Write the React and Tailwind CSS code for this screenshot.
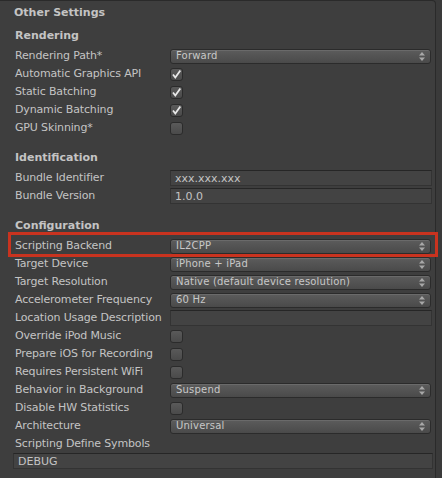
import React from 'react';

const font = { fontFamily: '"DejaVu Sans", "Liberation Sans", sans-serif' };

const Header = ({ children }) => (
  <div className="h-[18px] mb-[2px] flex items-center font-bold text-[11px] text-[#c4c4c4]">{children}</div>
);

const Arrows = () => (
  <svg width="6" height="9" viewBox="0 0 6 9" className="shrink-0">
    <path d="M3 0 L6 3.5 L0 3.5 Z" fill="#a8a8a8" />
    <path d="M0 5.5 L6 5.5 L3 9 Z" fill="#a8a8a8" />
  </svg>
);

const Dropdown = ({ value }) => (
  <div className="h-[15px] w-[261px] rounded-[3px] border border-[#2b2b2b] bg-gradient-to-b from-[#5c5c5c] to-[#4a4a4a] shadow-[inset_0_1px_0_#6a6a6a] flex items-center justify-between pl-[5px] pr-[5px]">
    <span className="text-[10px] text-[#c8c8c8] leading-none tracking-[0.2px]">{value}</span>
    <Arrows />
  </div>
);

const Check = ({ on }) => (
  <div className="w-[13px] h-[13px] rounded-[3px] border border-[#2b2b2b] bg-gradient-to-b from-[#5a5a5a] to-[#4a4a4a] flex items-center justify-center">
    {on && (
      <svg width="11" height="11" viewBox="0 0 11 11">
        <path d="M2 5.5 L4.3 8.5 L9.3 1.5" stroke="#e8e8e8" strokeWidth="1.8" fill="none" />
      </svg>
    )}
  </div>
);

const Field = ({ value, wide }) => (
  <div className={`h-[16px] ${wide ? 'w-[420px]' : 'w-[262px]'} border border-[#333] border-t-[#262626] bg-[#434343] flex items-center px-[4px]`}>
    <span className="text-[11px] text-[#c4c4c4] leading-none">{value}</span>
  </div>
);

const Row = ({ label, children }) => (
  <div className="h-[18px] flex items-center">
    <div className="w-[155px] shrink-0 text-[11px] text-[#c4c4c4] whitespace-nowrap tracking-[-0.15px]">{label}</div>
    {children}
  </div>
);

export default function App() {
  return (
    <div style={font} className="w-[442px] h-[478px] bg-[#3a3a3a] overflow-hidden relative">
      <div className="w-[436px] h-[478px] bg-[#3e3e3e] border-t border-r border-[#2a2a2a] rounded-tr-[4px]">
        <div className="h-[24px] flex items-center pl-[14px] font-bold text-[11px] text-[#c4c4c4]">Other Settings</div>

        <div className="pl-[15px] pt-[2px]">
          <Header>Rendering</Header>
          <Row label="Rendering Path*"><Dropdown value="Forward" /></Row>
          <Row label="Automatic Graphics API"><Check on /></Row>
          <Row label="Static Batching"><Check on /></Row>
          <Row label="Dynamic Batching"><Check on /></Row>
          <Row label="GPU Skinning*"><Check /></Row>

          <div className="h-[12px]" />
          <Header>Identification</Header>
          <Row label="Bundle Identifier"><Field value="xxx.xxx.xxx" /></Row>
          <Row label="Bundle Version"><Field value="1.0.0" /></Row>

          <div className="h-[12px]" />
          <Header>Configuration</Header>
          <Row label="Scripting Backend"><Dropdown value="IL2CPP" /></Row>
          <Row label="Target Device"><Dropdown value="iPhone + iPad" /></Row>
          <Row label="Target Resolution"><Dropdown value="Native (default device resolution)" /></Row>
          <Row label="Accelerometer Frequency"><Dropdown value="60 Hz" /></Row>
          <Row label="Location Usage Description"><Field value="" /></Row>
          <Row label="Override iPod Music"><Check /></Row>
          <Row label="Prepare iOS for Recording"><Check /></Row>
          <Row label="Requires Persistent WiFi"><Check /></Row>
          <Row label="Behavior in Background"><Dropdown value="Suspend" /></Row>
          <Row label="Disable HW Statistics"><Check /></Row>
          <Row label="Architecture"><Dropdown value="Universal" /></Row>
          <div className="h-[18px] flex items-center text-[11px] text-[#c4c4c4] tracking-[-0.15px]">Scripting Define Symbols</div>
          <div className="-ml-[2px]"><Field value="DEBUG" wide /></div>
        </div>
      </div>

      {/* highlight around the scripting backend row */}
      <div className="absolute left-[8px] top-[232px] w-[430px] h-[25px] border-[3px] border-[#c9331f]" />
    </div>
  );
}
